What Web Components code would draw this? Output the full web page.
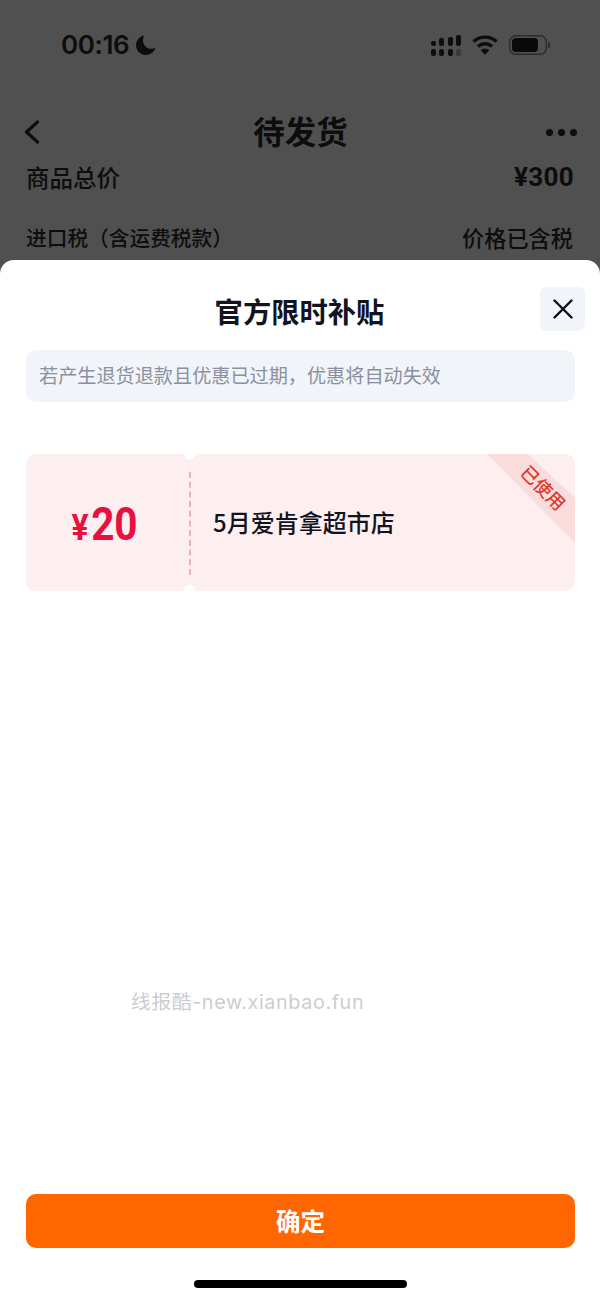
<!DOCTYPE html>
<html lang="zh-CN">
<head>
<meta charset="utf-8">
<title>官方限时补贴</title>
<style>
  html, body { margin: 0; padding: 0; }
  body { width: 600px; height: 1300px; overflow: hidden; background: #505050; color: #111217;
    font-family: "Noto Sans CJK SC", "Noto Sans", sans-serif; display: flex; flex-direction: column; }
</style>
</head>
<body>
<template id="t-status">
  <style>
    :host { display: flex; height: 90px; align-items: center; justify-content: space-between; padding: 0 50px 0 61px; box-sizing: border-box; color: #0d0d0d; }
    .l { display: flex; align-items: center; gap: 7px; font: 600 26px/1 Inter, sans-serif; letter-spacing: -0.4px; }
    .r { display: flex; align-items: center; gap: 11px; }
    svg { display: block; }
  </style>
  <div class="l"><span>00:16</span>
    <svg width="20" height="20" viewBox="0 0 20 20"><path fill="#0d0d0d" d="M8 0.500C3.400 1.600 0 5.600 0 10.200 0 15.600 4.400 20 9.800 20c4.500 0 8.400-3 9.700-7.200-1.300 .7-2.700 1-4.200 1C10.600 13.800 7 10.100 7 5.500 7 3.700 7.400 2 8 .5Z"/></svg>
  </div>
  <div class="r">
    <svg width="30" height="21" viewBox="0 0 30 21" fill="#0d0d0d">
      <rect x="0" y="6" width="5" height="5" rx="2"/><rect x="8" y="3" width="5" height="8" rx="2"/><rect x="17" y="2" width="5" height="9" rx="2"/><rect x="25" y="0" width="5" height="11" rx="2"/>
      <rect x="0" y="14" width="5" height="7" rx="2"/><rect x="8" y="14" width="5" height="7" rx="2"/><rect x="17" y="14" width="5" height="7" rx="2"/><rect x="25" y="14" width="5" height="7" rx="2" fill="#3a3a3a"/>
    </svg>
    <svg width="26" height="20" viewBox="0 0 26 20" fill="none" stroke="#0d0d0d" stroke-width="3.400">
      <path d="M1.500 6.500C8 .6 18 .6 24.500 6.500"/><path d="M6 11.500c4-3.600 10-3.600 14 0"/><path fill="#0d0d0d" stroke="none" d="M13 19.800 8.700 15.200c2.400-2 6.200-2 8.600 0Z"/>
    </svg>
    <svg width="41" height="20" viewBox="0 0 41 20"><rect x=".75" y=".75" width="36.500" height="18.500" rx="6" fill="none" stroke="#2c2c2c" stroke-width="1.500"/><rect x="3" y="3" width="26" height="14" rx="4" fill="#0a0a0a"/><rect x="39" y="7" width="2" height="6" rx="1" fill="#2c2c2c"/></svg>
  </div>
</template>

<template id="t-nav">
  <style>
    :host { display: grid; grid-template-columns: 1fr auto 1fr; height: 72px; box-sizing: border-box; padding: 20px 23px 8px 24px; align-items: center; color: #0d0d0d; }
    .t { font: 700 31.500px/44px "Noto Sans CJK SC", sans-serif; margin-top: -4px; }
    svg { display: block; }
    .m { justify-self: end; }
  </style>
  <svg width="16" height="24" viewBox="0 0 16 24" fill="none" stroke="#0d0d0d" stroke-width="3.200" stroke-linecap="round" stroke-linejoin="round"><path d="M13.500 2 2.500 12l11 10"/></svg>
  <span class="t"><slot></slot></span>
  <svg class="m" width="31" height="7" viewBox="0 0 31 7" fill="#0d0d0d"><circle cx="3.500" cy="3.500" r="3.500"/><circle cx="15.500" cy="3.500" r="3.500"/><circle cx="27.500" cy="3.500" r="3.500"/></svg>
</template>

<template id="t-row">
  <style>
    :host { display: flex; height: 30px; padding: 0 26px; margin-bottom: 30px; align-items: center; justify-content: space-between; color: #0d0d0d; font-family: "Noto Sans CJK SC", sans-serif; font-weight: 500; }
    :host([big]) { font-size: 23.500px; }
    :host(:not([big])) { font-size: 20.700px; padding-bottom: 8px; margin-bottom: 0; padding-right: 27px; }
    ::slotted([slot=value]) { font-size: 22.200px; }
  </style>
  <slot></slot><slot name="value"></slot>
</template>

<template id="t-sheet">
  <style>
    :host { display: flex; flex-direction: column; flex: 1; position: relative; background: #fff; border-radius: 14px 14px 0 0; min-height: 0; }
  </style>
  <slot></slot>
</template>

<template id="t-head">
  <style>
    :host { display: flex; height: 90px; box-sizing: border-box; padding: 27px 15px 0 26px; justify-content: space-between; align-items: flex-start; color: #11141f; }
    .t { flex: 1; text-align: center; font: 700 28.300px/48px "Noto Sans CJK SC", sans-serif; padding-left: 33px; }
    .x { width: 45px; height: 44px; background: #f1f4f8; border-radius: 6px; display: flex; align-items: center; justify-content: center; }
    svg { display: block; }
  </style>
  <span class="t"><slot></slot></span>
  <div class="x"><svg width="20" height="20" viewBox="0 0 20 20" fill="none" stroke="#0c0f18" stroke-width="2.400" stroke-linecap="round"><path d="M1.500 1.500l17 17M18.500 1.500l-17 17"/></svg></div>
</template>

<template id="t-notice">
  <style>
    :host { display: flex; align-items: center; height: 52px; margin: 0 25px 0 26px; padding: 0 13px; box-sizing: border-box; background: #f1f4f8; border-radius: 10px; color: #8b90a0; font: 400 19.150px/1 "Noto Sans CJK SC", sans-serif; white-space: nowrap; }
  </style>
  <slot></slot>
</template>

<template id="t-coupon">
  <style>
    :host { display: flex; position: relative; height: 137px; margin: 52px 25px 0 26px; background: #fdeef0; border-radius: 10px; overflow: hidden; }
    .price { width: 163px; box-sizing: border-box; display: flex; align-items: center; justify-content: center; color: #e8103f; font: 700 46px/1 Roboto, sans-serif; padding: 2px 5px 0 0; }
    .price b { font-size: 36px; font-weight: 700; margin-right: 3px; }
    .price span { display: inline-flex; align-items: baseline; transform: scaleX(.88); }
    .sep { width: 0; margin: 18px 0 16px; border-left: 2px dashed #ebb0b6; }
    .name { flex: 1; display: flex; align-items: center; padding-left: 22px; padding-bottom: 2px; color: #11141f; font: 500 24px/1 "Noto Sans CJK SC", sans-serif; }
    .notch { position: absolute; left: 158px; width: 12px; height: 12px; background: #fff; border-radius: 50%; }
    .notch.t { top: -6px; } .notch.b { bottom: -6px; }
    .band { position: absolute; top: 0; right: 0; width: 88px; height: 89px; background: #fbdcdd; clip-path: polygon(0 0, 41px 0, 88px 44px, 88px 89px); }
    .used { position: absolute; top: 21px; right: 0; width: 62px; text-align: center; transform: rotate(45deg); color: #de3a2e; font: 500 18px/24px "Noto Sans CJK SC", sans-serif; white-space: nowrap; }
  </style>
  <div class="price"><span><b>¥</b><slot name="amount"></slot></span></div>
  <div class="sep"></div>
  <div class="name"><slot></slot></div>
  <i class="notch t"></i><i class="notch b"></i>
  <i class="band"></i>
  <div class="used"><slot name="status"></slot></div>
</template>

<template id="t-btn">
  <style>
    :host { display: flex; align-items: center; justify-content: center; height: 54px; margin: 0 25px 0 26px; background: #ff6600; border-radius: 10px; color: #fff; font: 700 24.500px/1 "Noto Sans CJK SC", sans-serif; }
  </style>
  <slot></slot>
</template>

<template id="t-home">
  <style>
    :host { display: flex; justify-content: center; padding: 32px 0 12px; }
    i { display: block; width: 213px; height: 8px; border-radius: 4px; background: #000; }
  </style>
  <i></i>
</template>

<template id="t-mark">
  <style>
    :host { display: block; position: absolute; left: 131px; top: 728px; color: #cdcdcd; font: 400 19.800px/28px Inter, "Noto Sans CJK SC", sans-serif; white-space: nowrap; letter-spacing: .6px; }
  </style>
  <slot></slot>
</template>

<status-bar></status-bar>
<nav-bar>待发货</nav-bar>
<price-row big>商品总价<span slot="value" style="font:700 26px/1 Roboto,sans-serif;letter-spacing:.3px">¥300</span></price-row>
<price-row>进口税（含运费税款）<span slot="value">价格已含税</span></price-row>
<bottom-sheet>
  <sheet-head>官方限时补贴</sheet-head>
  <notice-bar>若产生退货退款且优惠已过期，优惠将自动失效</notice-bar>
  <coupon-card><span slot="amount">20</span>5月爱肯拿超市店<span slot="status">已使用</span></coupon-card>
  <div style="flex:1"></div>
  <water-mark>线报酷-new.xianbao.fun</water-mark>
  <primary-button>确定</primary-button>
  <home-bar></home-bar>
</bottom-sheet>

<script>
  const defs = { 'status-bar':'t-status','nav-bar':'t-nav','price-row':'t-row','bottom-sheet':'t-sheet','sheet-head':'t-head','notice-bar':'t-notice','coupon-card':'t-coupon','primary-button':'t-btn','home-bar':'t-home','water-mark':'t-mark' };
  for (const [name, id] of Object.entries(defs)) {
    customElements.define(name, class extends HTMLElement {
      constructor() { super(); this.attachShadow({mode:'open'}).appendChild(document.getElementById(id).content.cloneNode(true)); }
    });
  }
</script>
</body>
</html>
